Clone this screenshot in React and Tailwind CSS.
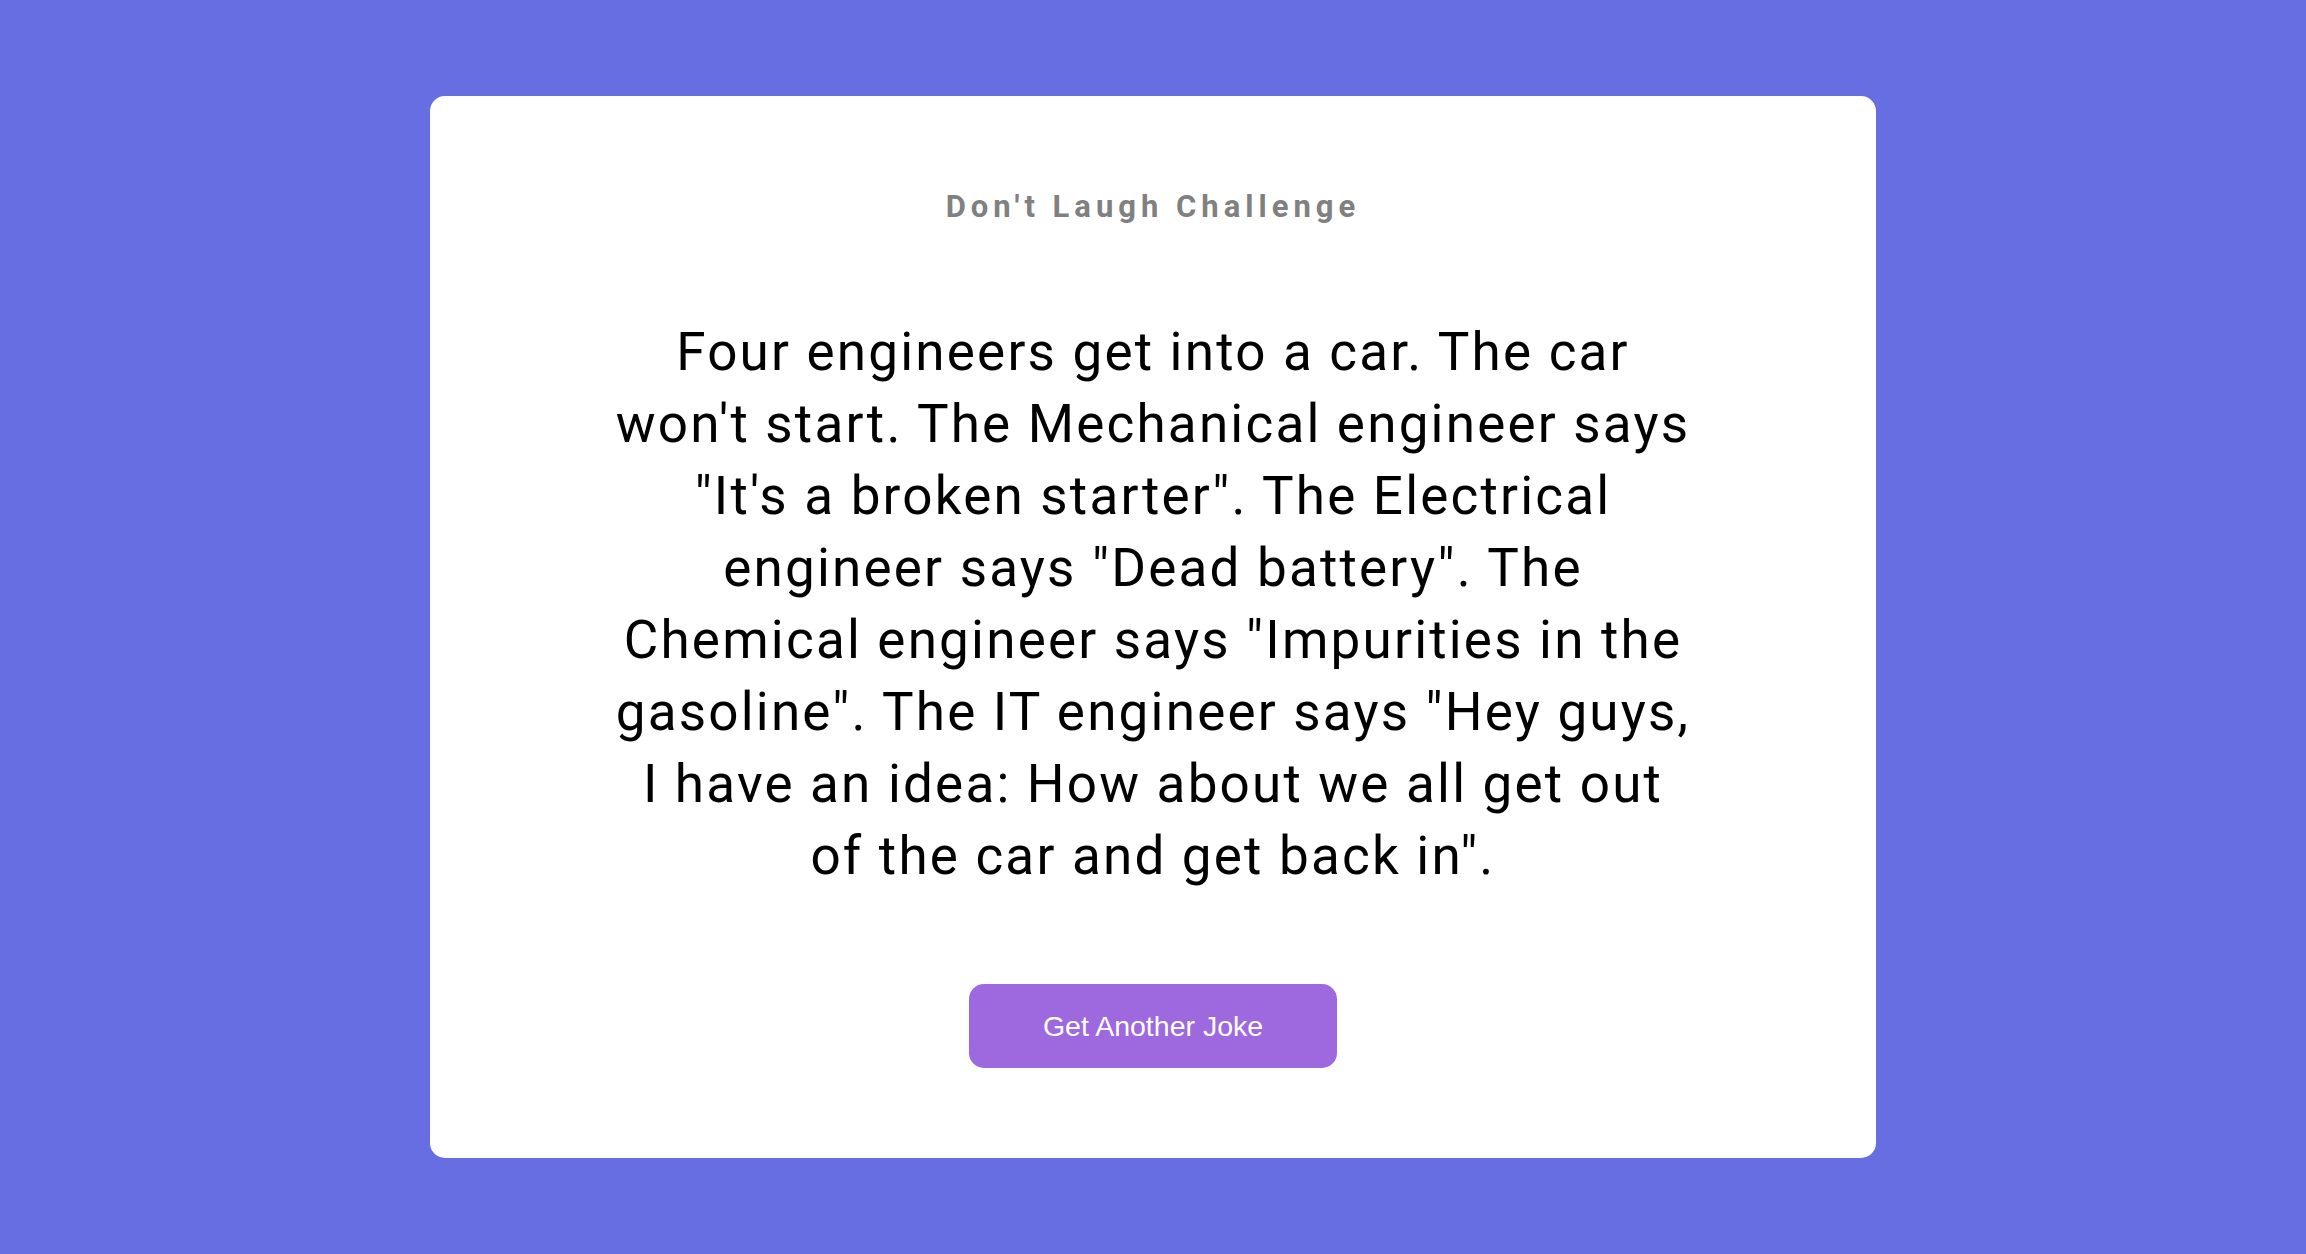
export default function App() {
  return (
    <div className="w-full min-h-[1254px] bg-[#676ee1] flex items-center justify-center">
      <div className="w-[1446px] h-[1062px] rounded-[15px] bg-white flex flex-col items-center pt-[93px]">
        <h1 className="h-[36px] leading-[36px] text-[31px] font-bold tracking-[5px] text-[#808080] [font-family:Roboto,sans-serif]">
          Don't Laugh Challenge
        </h1>
        <p className="mt-[91px] w-[1078px] text-center text-[53px] leading-[72px] tracking-[2.2px] text-black [font-family:Roboto,sans-serif]">
          Four engineers get into a car. The car won't start. The Mechanical engineer says "It's a broken starter". The Electrical engineer says "Dead battery". The Chemical engineer says "Impurities in the gasoline". The IT engineer says "Hey guys, I have an idea: How about we all get out of the car and get back in".
        </p>
        <button className="mt-[92px] w-[368px] h-[84px] rounded-[15px] bg-[#9e68df] text-white text-[28.5px] [font-family:'Liberation_Sans',Arial,sans-serif]">
          Get Another Joke
        </button>
      </div>
    </div>
  );
}
